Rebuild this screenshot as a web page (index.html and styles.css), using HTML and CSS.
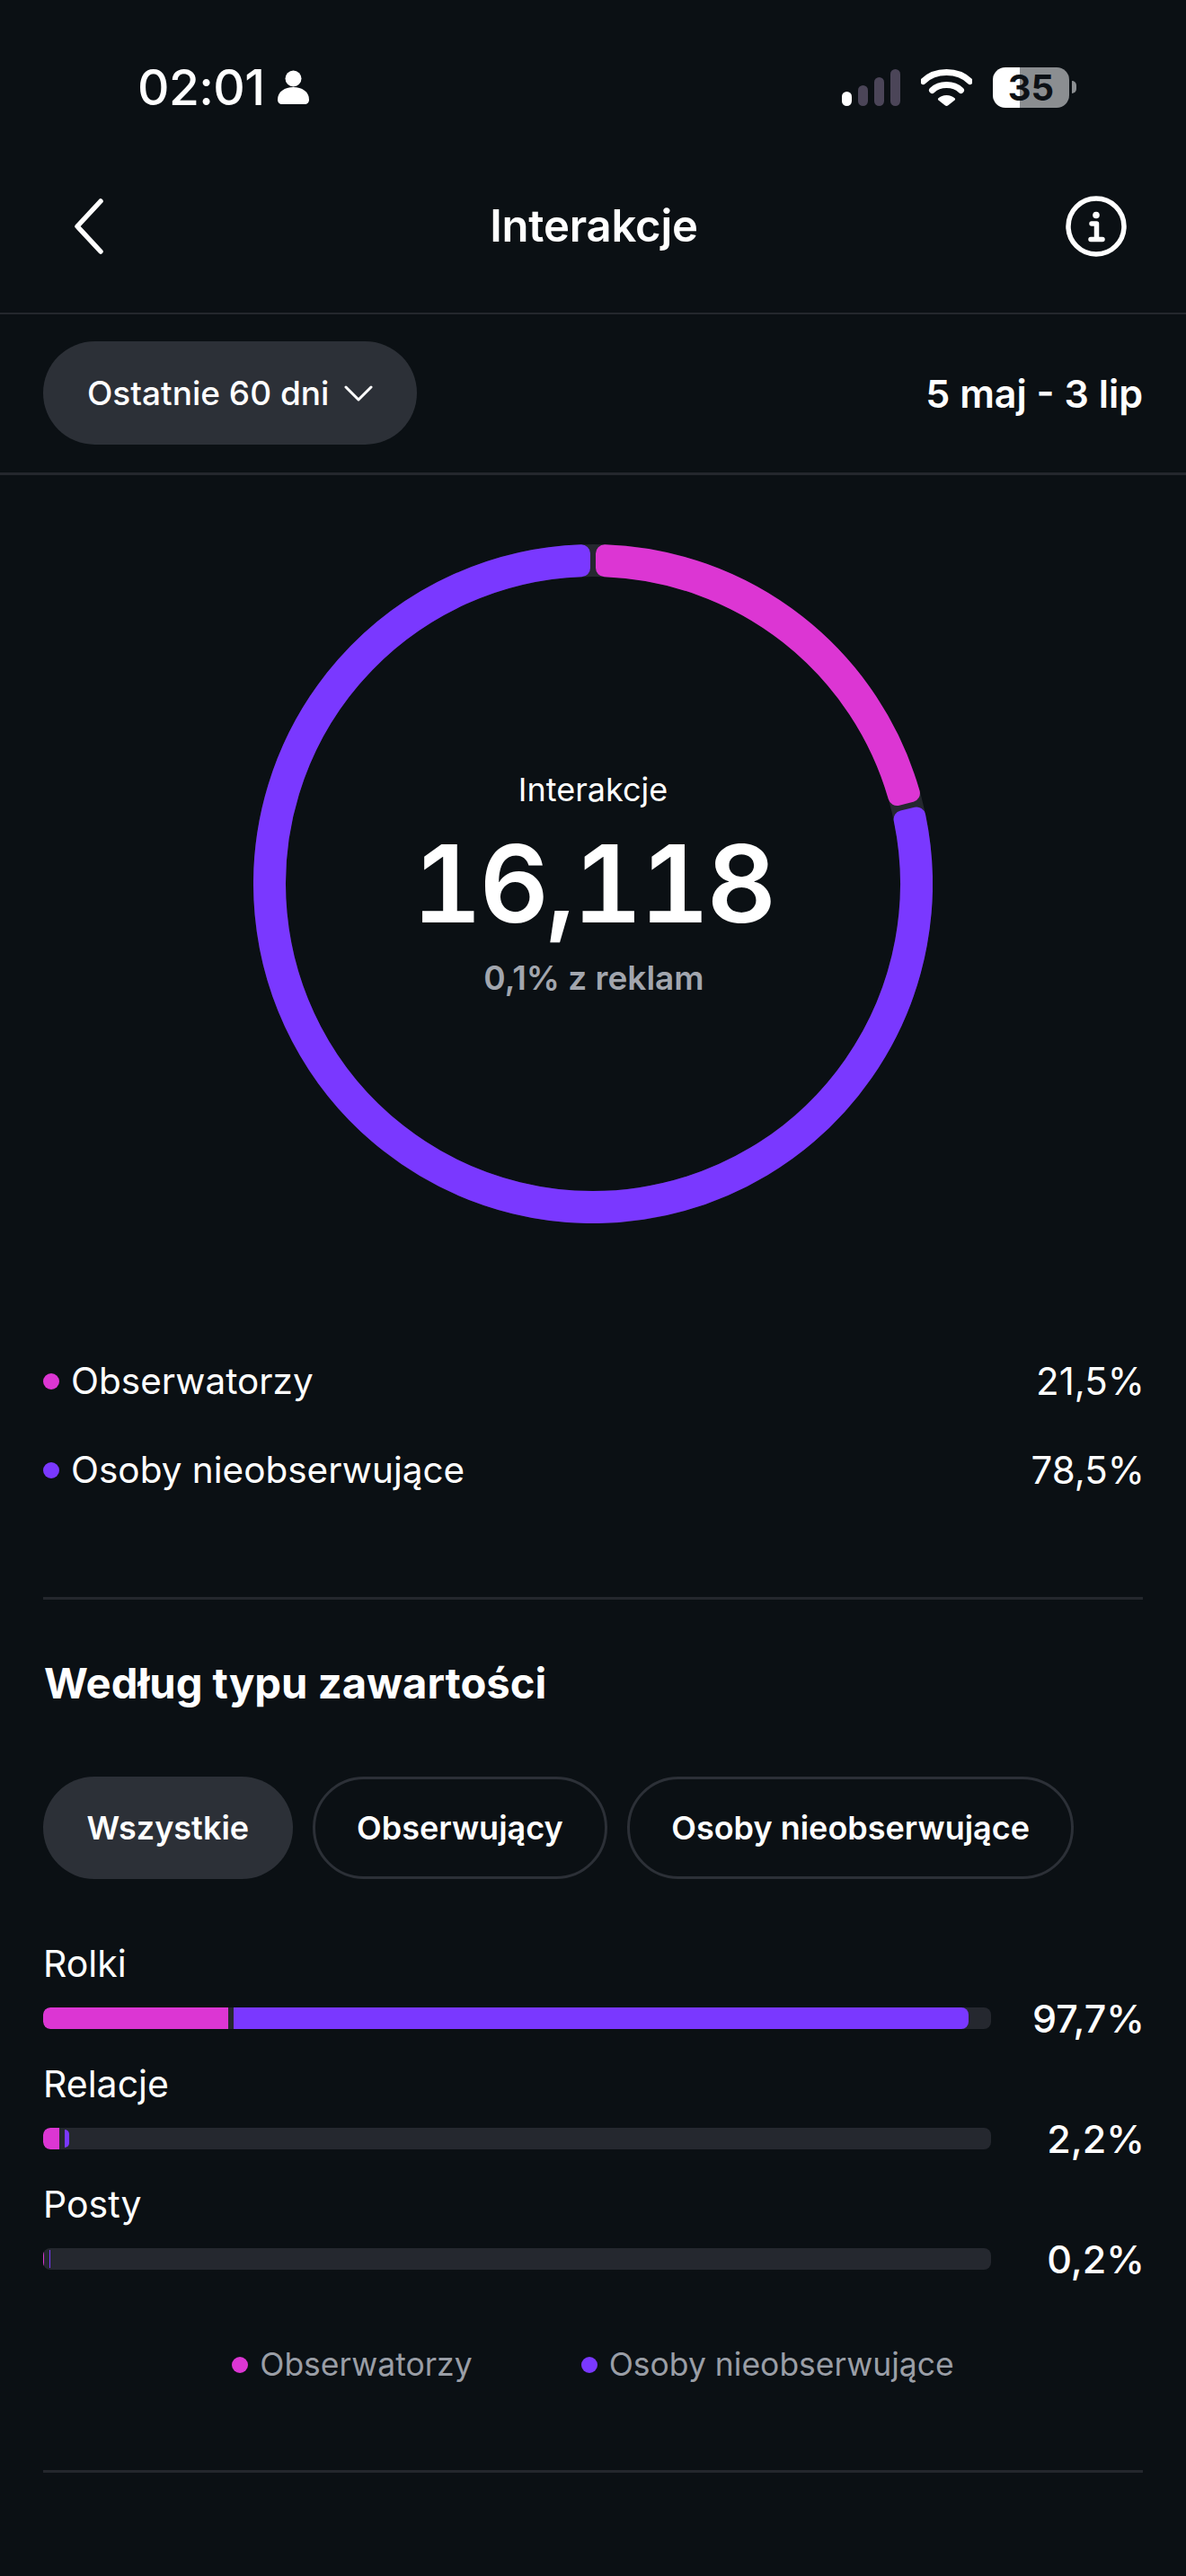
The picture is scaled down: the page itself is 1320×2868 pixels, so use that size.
FILE: index.html
```html
<!DOCTYPE html>
<html lang="pl">
<head>
<meta charset="utf-8">
<title>Interakcje</title>
<link rel="stylesheet" href="styles.css">
</head>
<body>
<div class="screen">
  <div class="status">
    <div class="status-left">
      <span class="time">02:01</span>
      <svg class="person" viewBox="0 0 35 38"><circle cx="17.5" cy="9.5" r="9"/><path d="M0 33c0-9 8-14 17.500-14S35 24 35 33c0 3-2 5-5 5H5c-3 0-5-2-5-5z"/></svg>
    </div>
    <div class="status-right">
      <div class="signal"><i class="s1"></i><i class="s2"></i><i class="s3"></i><i class="s4"></i></div>
      <svg class="wifi" viewBox="0 0 57 42"><path d="M2.500 14.500C8 9 17 4.500 28.500 4.500S49 9 54.500 14.500" /><path d="M12.500 24.500C16 21 21.500 18.500 28.500 18.500S41 21 44.500 24.500"/><path class="wifi-tip" d="M28.500 30c3.800 0 7 1.300 9 3.200.8.800.8 1.600.1 2.400l-7.300 5.700c-1.100.9-2.500.9-3.600 0l-7.300-5.700c-.7-.8-.7-1.600.1-2.400 2-1.900 5.200-3.200 9-3.200z"/></svg>
      <div class="battery"><span class="battery-body">35</span><span class="battery-nub"></span></div>
    </div>
  </div>

  <header class="topbar">
    <svg class="back" viewBox="0 0 34 62"><path d="M30 3 4 31l26 28"/></svg>
    <h1 class="title">Interakcje</h1>
    <svg class="info" viewBox="0 0 68 68"><circle cx="34" cy="34" r="31"/><circle class="info-dot" cx="34" cy="21.500" r="3.800"/><path class="info-i" d="M29 31h5.500v17M28 48.500h13"/></svg>
  </header>

  <div class="filters">
    <div class="pill pill-filled pill-range">
      <span>Ostatnie 60 dni</span>
      <svg class="chev" viewBox="0 0 32 20"><path d="M2 3l14 14L30 3"/></svg>
    </div>
    <div class="range">5 maj - 3 lip</div>
  </div>

  <section class="ring-section">
    <div class="ring">
      <svg class="ring-svg" viewBox="-378 -378 756 756">
        <circle class="ring-track" r="360"/>
        <path class="seg-pink" d="M13 -367.770A368 368 0 0 1 353.900 -100.900L338.400 -96.900A352 352 0 0 0 13 -351.760Z"/>
        <path class="seg-purple" d="M360.200 -75.500A368 368 0 1 1 -13 -367.770L-13 -351.760A352 352 0 1 0 344.600 -71.800Z"/>
      </svg>
      <div class="ring-center">
        <div class="ring-label">Interakcje</div>
        <div class="ring-value">16,118</div>
        <div class="ring-sub">0,1% z reklam</div>
      </div>
    </div>
  </section>

  <section class="share">
    <div class="share-row"><span class="dot dot-pink"></span><span class="share-name">Obserwatorzy</span><span class="share-val">21,5%</span></div>
    <div class="share-row"><span class="dot dot-purple"></span><span class="share-name">Osoby nieobserwujące</span><span class="share-val">78,5%</span></div>
  </section>

  <section class="types">
    <h2 class="heading">Według typu zawartości</h2>
    <div class="tabs">
      <div class="pill pill-filled tab">Wszystkie</div>
      <div class="pill pill-outline tab">Obserwujący</div>
      <div class="pill pill-outline tab">Osoby nieobserwujące</div>
    </div>
    <div class="bars">
      <div class="bar-row">
        <div class="bar-label">Rolki</div>
        <div class="bar"><span class="fill fill-pink" style="width:206px"></span><span class="fill fill-purple" style="width:818px"></span></div>
        <div class="bar-pct">97,7%</div>
      </div>
      <div class="bar-row">
        <div class="bar-label">Relacje</div>
        <div class="bar"><span class="fill fill-pink" style="width:18px"></span><span class="fill fill-purple fill-thin" style="width:5px"></span></div>
        <div class="bar-pct">2,2%</div>
      </div>
      <div class="bar-row">
        <div class="bar-label">Posty</div>
        <div class="bar"><span class="fill fill-pink fill-thin fill-hair" style="width:1px"></span><span class="fill fill-purple fill-thin fill-hair" style="width:1px"></span></div>
        <div class="bar-pct">0,2%</div>
      </div>
    </div>
    <div class="key">
      <div class="key-item"><span class="dot dot-pink"></span><span>Obserwatorzy</span></div>
      <div class="key-item"><span class="dot dot-purple"></span><span>Osoby nieobserwujące</span></div>
    </div>
  </section>
</div>
</body>
</html>
```
FILE: styles.css
```css
* { box-sizing: border-box; }
html, body { margin: 0; padding: 0; background: #0b1014; }
body { font-family: Inter, "Liberation Sans", sans-serif; color: #fff; }
.screen { width: 1320px; height: 2868px; overflow: hidden; }

/* status bar */
.status { height: 194px; display: flex; justify-content: space-between; align-items: center; padding: 0 122px 0 153px; }
.status-left { display: flex; align-items: center; gap: 15px; }
.time { font-size: 55px; font-weight: 500; line-height: 40px; letter-spacing: -0.6px; }
.person { width: 35px; height: 38px; fill: #fff; }
.status-right { display: flex; align-items: center; }
.signal { display: flex; align-items: flex-end; gap: 7px; height: 41px; margin-right: 23px; }
.signal i { display: block; width: 11px; border-radius: 6px; background: #4b4558; }
.signal .s1 { height: 16px; background: #fff; }
.signal .s2 { height: 23px; }
.signal .s3 { height: 32px; }
.signal .s4 { height: 41px; }
.wifi { width: 57px; height: 42px; fill: none; stroke: #fff; stroke-width: 7px; stroke-linecap: round; margin-right: 23px; }
.wifi-tip { fill: #fff; stroke: none; }
.battery { display: flex; align-items: center; gap: 3px; }
.battery-body { width: 85px; height: 45px; border-radius: 14px; background: linear-gradient(90deg, #fff 0 30px, #8b8e91 30px); color: #0d1116; font-size: 40px; font-weight: 700; line-height: 45px; text-align: center; }
.battery-nub { width: 5px; height: 14px; border-radius: 0 5px 5px 0; background: #8b8e91; }

/* top bar */
.topbar { height: 156px; padding: 0 66px 38px 82px; border-bottom: 2px solid #24272d; display: grid; grid-template-columns: 1fr auto 1fr; align-items: center; }
.back { width: 34px; height: 62px; fill: none; stroke: #fff; stroke-width: 5.500px; stroke-linecap: round; stroke-linejoin: round; }
.title { margin: 0 0 0 -14px; font-size: 49px; font-weight: 600; line-height: 60px; letter-spacing: -0.2px; }
.info { width: 68px; height: 68px; fill: none; stroke: #fff; stroke-width: 5.500px; justify-self: end; }
.info-dot { fill: #fff; stroke: none; }
.info-i { stroke-linecap: round; stroke-linejoin: round; }

/* filter row */
.filters { height: 179px; padding: 30px 48px 31px; border-bottom: 3px solid #24272d; display: flex; align-items: center; justify-content: space-between; }
.pill { display: flex; align-items: center; border-radius: 60px; white-space: nowrap; }
.pill-filled { background: #2c3037; }
.pill-outline { border: 3px solid #2c3037; }
.pill-range { width: 416px; height: 115px; padding-left: 49px; gap: 17px; font-size: 37px; font-weight: 500; }
.chev { width: 32px; height: 20px; fill: none; stroke: #fff; stroke-width: 3px; stroke-linecap: round; stroke-linejoin: round; }
.range { font-size: 43px; font-weight: 600; line-height: 50px; }

/* ring */
.ring-section { display: flex; justify-content: center; padding-top: 77px; }
.ring { display: grid; width: 756px; height: 756px; }
.ring-svg, .ring-center { grid-area: 1 / 1; }
.ring-svg { width: 756px; height: 756px; display: block; }
.ring-track { fill: none; stroke: #25282f; stroke-width: 36px; }
.seg-pink { fill: #dc36d3; stroke: #dc36d3; stroke-width: 20px; stroke-linejoin: round; }
.seg-purple { fill: #7a38ff; stroke: #7a38ff; stroke-width: 20px; stroke-linejoin: round; }
.ring-center { display: flex; flex-direction: column; align-items: center; justify-content: center; }
.ring-label { font-size: 36px; line-height: 44px; }
.ring-value { font-size: 120px; font-weight: 600; line-height: 130px; margin-top: 18px; letter-spacing: -3px; font-variant-numeric: tabular-nums; font-feature-settings: "tnum" 1; }
.ring-sub { font-size: 37px; font-weight: 600; line-height: 44px; margin-top: 18px; margin-left: 2px; color: #a2a6ae; }

/* share rows */
.share { margin-top: 126px; padding: 0 46px 92px 48px; }
.share-row { height: 99px; display: flex; align-items: center; font-size: 40.500px; }
.dot { width: 18px; height: 18px; border-radius: 50%; flex: none; }
.dot-pink { background: #dc36d3; }
.dot-purple { background: #7a38ff; }
.share-name { margin-left: 13px; flex: 1; }
.share-val { text-align: right; font-size: 42px; }

/* content types */
.types { margin: 0 48px; padding-top: 63px; border-top: 3px solid #24272d; border-bottom: 3px solid #24272d; height: 975px; }
.heading { margin: 0; font-size: 47.200px; font-weight: 700; line-height: 60px; padding-left: 1px; }
.tabs { display: flex; gap: 22.500px; margin-top: 74px; }
.tab { height: 114px; padding: 0 46px; font-size: 36px; font-weight: 600; }
.pill-filled.tab { padding: 0 48.500px; }
.bars { margin-top: 69px; display: flex; flex-direction: column; gap: 36px; }
.bar-row { display: grid; grid-template-columns: 1055px 1fr; row-gap: 24px; }
.bar-label { grid-column: 1 / -1; font-size: 41px; line-height: 50px; }
.bar { height: 24px; border-radius: 8px; background: #25282f; display: flex; align-items: center; gap: 6px; overflow: hidden; }
.fill { display: block; height: 24px; }
.fill-pink { background: #dc36d3; border-radius: 8px 0 0 8px; }
.fill-purple { background: #7a38ff; border-radius: 0 8px 8px 0; }
.fill-thin { height: 20px; border-radius: 0 5px 5px 0; }
.fill-hair { border-radius: 0; }
.bar-pct { font-size: 43px; font-weight: 500; line-height: 24px; text-align: right; margin-right: -2px; }
.key { margin-top: 81px; display: flex; justify-content: center; gap: 121px; color: #9a9ea6; font-size: 35.500px; line-height: 50px; }
.key-item { display: flex; align-items: center; gap: 13px; }
```
